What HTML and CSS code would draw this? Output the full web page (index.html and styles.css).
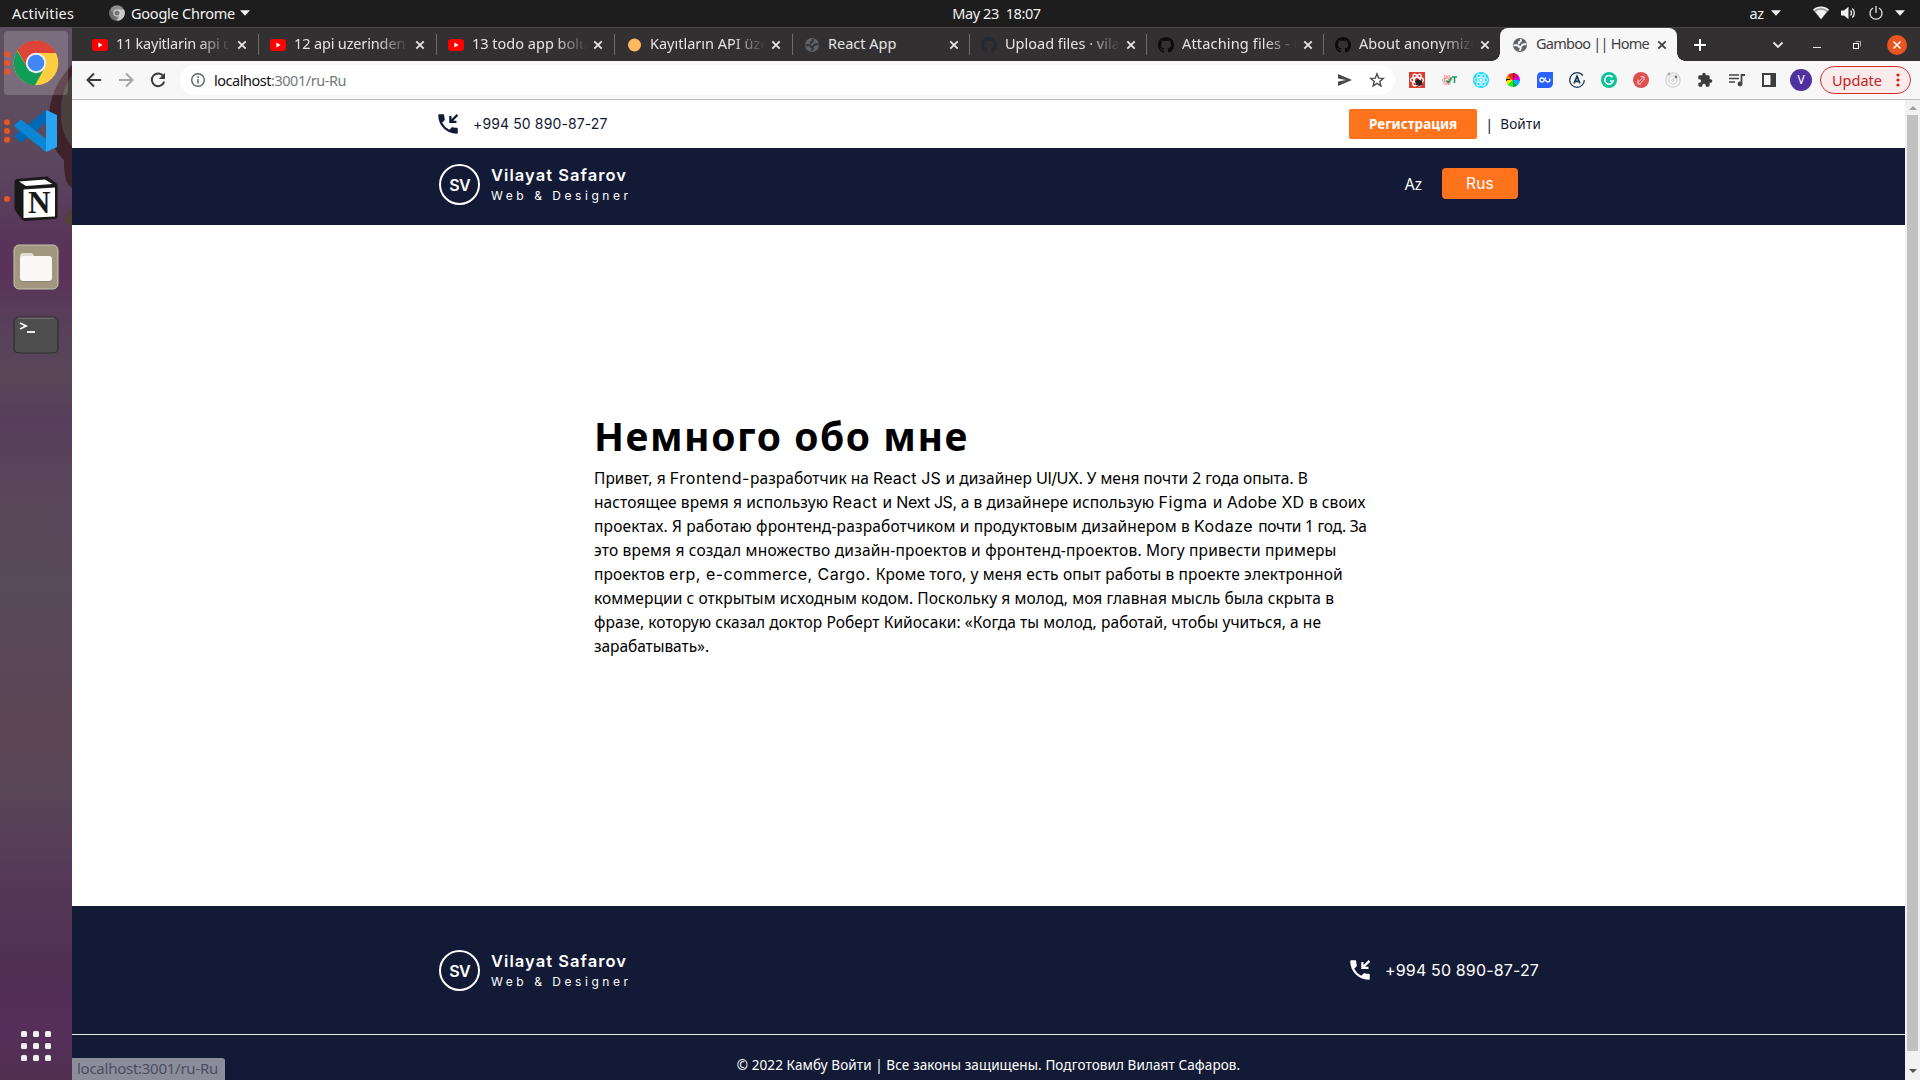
FILE: index.html
```html
<!DOCTYPE html>
<html lang="ru">
<head>
<meta charset="utf-8">
<title>Gamboo || Home</title>
<link rel="stylesheet" href="styles.css">
</head>
<body>
<svg class="defs" width="0" height="0">
  <symbol id="i-yt" viewBox="0 0 16 16"><rect y="2" width="16" height="12" rx="3" fill="#f00"/><path d="M6.400 5.500v5L10.600 8z" fill="#fff"/></symbol>
  <symbol id="i-globe" viewBox="0 0 16 16"><circle cx="8" cy="8" r="7" fill="#5f6368"/><path d="M2.500 8.200h2.700q1.600.1 1.700 1.600h1.600M8.800 2.800q.4 1.900-1.200 2.200-.9.200-.7 1.300" class="land"/><path d="M13.600 7.300h-2.200q-1.300.2-1.600 1.600M8.500 10q.6 1.400-.5 3" class="land"/></symbol>
  <symbol id="i-gh" viewBox="0 0 16 16"><path d="M8 0C3.580 0 0 3.580 0 8c0 3.540 2.290 6.530 5.470 7.590.4.070.55-.17.55-.38 0-.19-.01-.82-.01-1.490-2.010.37-2.530-.49-2.690-.94-.09-.23-.48-.94-.82-1.130-.28-.15-.68-.52-.01-.53.63-.01 1.080.58 1.230.82.72 1.210 1.870.87 2.330.66.070-.52.28-.87.51-1.070-1.780-.2-3.640-.89-3.640-3.950 0-.87.31-1.590.82-2.150-.08-.2-.36-1.020.08-2.120 0 0 .67-.21 2.200.82.64-.18 1.320-.27 2-.27s1.360.09 2 .27c1.530-1.040 2.200-.82 2.200-.82.44 1.100.16 1.920.08 2.120.51.56.82 1.270.82 2.150 0 3.070-1.870 3.750-3.650 3.950.29.25.54.73.54 1.480 0 1.070-.01 1.930-.01 2.200 0 .21.15.46.55.38A8.010 8.010 0 0 0 16 8c0-4.420-3.580-8-8-8z" fill="currentColor"/></symbol>
  <symbol id="i-x" viewBox="0 0 16 16"><path d="M4.300 4.300l7.400 7.400M11.700 4.300l-7.400 7.400" stroke="currentColor" stroke-width="1.900" fill="none"/></symbol>
  <symbol id="i-call" viewBox="0 0 24 24"><path fill="currentColor" d="M20 15.500c-1.250 0-2.450-.2-3.570-.57a1.020 1.020 0 0 0-1.020.24l-2.200 2.200a15.100 15.100 0 0 1-6.590-6.590l2.200-2.200c.28-.28.36-.67.25-1.020A11.360 11.360 0 0 1 8.500 4c0-.55-.45-1-1-1H4c-.55 0-1 .45-1 1 0 9.390 7.610 17 17 17 .55 0 1-.45 1-1v-3.500c0-.55-.45-1-1-1z"/><path d="M20.700 3.600L14.800 9.500M14.200 4.500v5.600h5.600" stroke="currentColor" stroke-width="2.100" fill="none"/></symbol>
  <symbol id="i-down" viewBox="0 0 10 6"><path d="M0 .3h10L5 5.700z" fill="currentColor"/></symbol>
  <symbol id="i-atom" viewBox="0 0 16 16"><g fill="none" stroke="currentColor" stroke-width="1.300"><ellipse cx="8" cy="8" rx="6.500" ry="2.600"/><ellipse cx="8" cy="8" rx="6.500" ry="2.600" transform="rotate(60 8 8)"/><ellipse cx="8" cy="8" rx="6.500" ry="2.600" transform="rotate(120 8 8)"/></g></symbol>
</svg>

<header class="panel">
  <div class="panel-left"><span class="activities">Activities</span>
    <svg class="mono-chrome" viewBox="0 0 16 16"><circle cx="8" cy="8" r="7.700" fill="#8d8d8d"/><path d="M8 4.500h7A7.700 7.700 0 0 1 8 15.700L11 9.800z" fill="#c9c9c9"/><path d="M1.500 3.800L5 10l3 2-1.500 3.600A7.700 7.700 0 0 1 1.500 3.800z" fill="#6e6e6e"/><circle cx="8" cy="8" r="3.500" fill="#ddd"/><circle cx="8" cy="8" r="2.600" fill="#777"/></svg>
    <span class="app-name">Google Chrome</span><svg class="caret"><use href="#i-down"/></svg></div>
  <div class="clock">May 23 &nbsp;18:07</div>
  <div class="tray"><span class="lang">az</span><svg class="caret"><use href="#i-down"/></svg>
    <svg class="wifi" width="16" height="14" viewBox="0 0 16 14"><path d="M.4 4.300a11 11 0 0 1 15.200 0L8 13.500z" fill="#9a9a9a"/><path d="M.4 4.300a11 11 0 0 1 15.200 0" fill="none" stroke="#f2f2f2" stroke-width="1.400"/><path d="M2.400 5.800a8.500 8.500 0 0 1 11.200 0L8 13z" fill="#f2f2f2"/></svg>
    <svg class="vol" width="16" height="14" viewBox="0 0 16 14"><path d="M0 4.500h3L7.500.8v12.400L3 9.500H0z" fill="#f2f2f2"/><path d="M9.500 4.500a3.500 3.500 0 0 1 0 5M11.300 2.500a6 6 0 0 1 0 9" fill="none" stroke="#f2f2f2" stroke-width="1.300"/></svg>
    <svg class="power" width="14" height="14" viewBox="0 0 14 14"><path d="M4 2A6 6 0 1 0 10 2M7 0v7" fill="none" stroke="#e6e6e6" stroke-width="1.300"/></svg>
    <svg class="caret"><use href="#i-down"/></svg></div>
</header>

<div class="desktop">
<aside class="dock">
  <svg class="wallpaper" viewBox="0 0 72 200" width="72" height="200"><path d="M72 38C58 52 49 70 49 92c0 20 5 32 15 41 0 20 3 24 8 28z" fill="#40222c"/><path d="M72 48c-9 12-12 28-11 44 1 12 5 20 11 27z" fill="#4b4040"/><path d="M72 182c-6 3-8 9-8 13l8 5z" fill="#54403a"/></svg>
  <div class="dock-item active"><i class="dots d3"></i>
    <svg width="46" height="46" viewBox="0 0 46 46"><circle cx="23" cy="23" r="22.300" fill="#ffcd40"/><path d="M23 23L4.500 10.600A22.300 22.300 0 0 1 43 13H23z" fill="#db4437"/><path d="M4.200 11.100A22.300 22.300 0 0 0 22 45.300L31 29 14 27z" fill="#0f9d58"/><path d="M4.500 10.600L14 27l9-14h20A22.300 22.300 0 0 0 4.500 10.600z" fill="#db4437"/><circle cx="23" cy="23" r="10.200" fill="#f1f1f1"/><circle cx="23" cy="23" r="8.300" fill="#4285f4"/></svg></div>
  <div class="dock-item"><i class="dots d3"></i>
    <svg width="44" height="44" viewBox="0 0 44 44"><path d="M32 1v13L7 33.500 1 28.500c-.8-.8-.8-1.700 0-2.500z" fill="#0069b3"/><path d="M32 43V30L7 10.500 1 15.500c-.8.800-.8 1.700 0 2.500z" fill="#0b86d4"/><path d="M32 1l11 5v32l-11 5z" fill="#27a5f2"/></svg></div>
  <div class="dock-item"><i class="dots d1"></i>
    <svg width="44" height="46" viewBox="0 0 44 46"><path d="M3 3L33 .5 42 7q1.500 1 1.500 3v30q0 3-3 3L11 45q-2 0-3.500-2L1.500 35Q.5 34 .5 32V6Q.5 3.400 3 3z" fill="#191919"/><path d="M5 5.500L31 3.500l7.500 4.500L12 10z" fill="#fff"/><path d="M9.500 13.500L41 11.500v29L9.500 42z" fill="#fff"/><text x="25.200" y="37" text-anchor="middle" class="notion-n">N</text></svg></div>
  <div class="dock-item">
    <svg width="46" height="46" viewBox="0 0 46 46"><rect x="1" y="1" width="44" height="44" rx="5" fill="#a1977f" stroke="#c9c4b2"/><path d="M7 12q0-3 3-3h9l4 5v8H7z" fill="#e2ddd0"/><rect x="7" y="13" width="32" height="25" rx="3" fill="#8c846f"/><rect x="7" y="12" width="32" height="25" rx="3" fill="#f9f8f7"/></svg></div>
  <div class="dock-item">
    <svg width="46" height="40" viewBox="0 0 46 40"><rect x="1" y="2" width="44" height="36" rx="4.500" fill="#4d4d4d" stroke="#2e2b2e" stroke-width="1.200"/><path d="M5 3.200h36" stroke="#777"/><path d="M7 8l6 3-6 3" fill="none" stroke="#fff" stroke-width="1.800"/><path d="M14 17h8" stroke="#fff" stroke-width="1.800"/></svg></div>
  <div class="apps"><i></i><i></i><i></i><i></i><i></i><i></i><i></i><i></i><i></i></div>
</aside>

<div class="window">
  <div class="tabs">
    <div class="tab"><svg><use href="#i-yt"/></svg><span class="fade a">11 kayitlarin api u</span><svg class="x"><use href="#i-x"/></svg></div>
    <div class="tab"><svg><use href="#i-yt"/></svg><span class="fade b">12 api uzerinden</span><svg class="x"><use href="#i-x"/></svg></div>
    <div class="tab"><svg><use href="#i-yt"/></svg><span class="fade">13 todo app bolu</span><svg class="x"><use href="#i-x"/></svg></div>
    <div class="tab"><svg viewBox="0 0 16 16"><circle cx="8.500" cy="8" r="6.500" fill="#ffb95e"/></svg><span class="fade">Kayıtların API üze</span><svg class="x"><use href="#i-x"/></svg></div>
    <div class="tab n"><svg class="on-dark"><use href="#i-globe"/></svg><span>React App</span><svg class="x"><use href="#i-x"/></svg></div>
    <div class="tab n"><svg class="gh-dim"><use href="#i-gh"/></svg><span class="fade">Upload files · vila</span><svg class="x"><use href="#i-x"/></svg></div>
    <div class="tab n"><svg class="gh"><use href="#i-gh"/></svg><span class="fade c">Attaching files - G</span><svg class="x"><use href="#i-x"/></svg></div>
    <div class="tab n last"><svg class="gh"><use href="#i-gh"/></svg><span class="fade">About anonymize</span><svg class="x"><use href="#i-x"/></svg></div>
    <div class="tab n current"><svg class="on-light"><use href="#i-globe"/></svg><span class="home">Gamboo || Home</span><svg class="x"><use href="#i-x"/></svg></div>
    <svg class="plus" width="14" height="14" viewBox="0 0 14 14"><path d="M7 1v12M1 7h12" stroke="#fff" stroke-width="2"/></svg>
    <div class="controls">
      <svg width="12" height="8" viewBox="0 0 12 8"><path d="M1.500 1.500L6 6l4.500-4.500" fill="none" stroke="#e8e8e8" stroke-width="1.800"/></svg>
      <svg width="8" height="8" viewBox="0 0 8 8"><path d="M0 6.500h8" stroke="#e8e8e8"/></svg>
      <svg width="8" height="8" viewBox="0 0 8 8"><path d="M2.500.5h5v5" fill="none" stroke="#aaa"/><rect x=".5" y="2.500" width="5" height="5" fill="none" stroke="#fff"/></svg>
      <svg width="20" height="20" viewBox="0 0 20 20"><circle cx="10" cy="10" r="10" fill="#e95420"/><path d="M6.500 6.500l7 7M13.500 6.500l-7 7" stroke="#fff" stroke-width="1.500"/></svg>
    </div>
  </div>

  <div class="toolbar">
    <div class="nav-icons">
      <svg width="16" height="16" viewBox="0 0 16 16"><path d="M15 8H2M8 1.500L1.500 8 8 14.500" fill="none" stroke="#3c3c3c" stroke-width="2"/></svg>
      <svg width="16" height="16" viewBox="0 0 16 16"><path d="M1 8h13M8 1.500L14.500 8 8 14.500" fill="none" stroke="#a5a5a5" stroke-width="2"/></svg>
      <svg width="16" height="16" viewBox="0 0 16 16"><path d="M13.500 4.500A6.300 6.300 0 1 0 14.200 9.500" fill="none" stroke="#3c3c3c" stroke-width="2"/><path d="M15 .8v6.200H8.800z" fill="#3c3c3c"/></svg>
    </div>
    <div class="omnibox">
      <svg width="16" height="16" viewBox="0 0 16 16"><circle cx="8" cy="8" r="6.300" fill="none" stroke="#5f6368" stroke-width="1.400"/><path d="M8 7v4.500M8 4.300v1.600" stroke="#5f6368" stroke-width="1.500"/></svg>
      <span class="url">localhost<span>:3001/ru-Ru</span></span>
      <svg class="send" width="14" height="12" viewBox="0 0 14 12"><path d="M0 0l14 6L0 12V7.500L8 6 0 4.500z" fill="#4a4a4a"/></svg>
      <svg width="16" height="16" viewBox="0 0 16 16"><path d="M8 1.800l1.700 4.300 4.600.3-3.500 3 1.100 4.500L8 11.400l-3.900 2.500 1.100-4.500-3.500-3 4.600-.3z" fill="none" stroke="#4a4a4a" stroke-width="1.400"/></svg>
    </div>
    <div class="ext">
      <svg viewBox="0 0 16 16"><rect width="16" height="16" fill="#db3d35"/><use href="#i-atom" class="white" width="16" height="16"/><path d="M6 9l3-2 4 2v4l-3 1-3-1z" fill="#222"/></svg>
      <svg viewBox="0 0 16 16"><use href="#i-atom" class="pink" width="12" height="12" y="2"/><path d="M5.500 8.500l2 2 3-5" fill="none" stroke="#0a9d58" stroke-width="1.500"/><path d="M11 5h5M13.500 5v6" stroke="#0a9d58" stroke-width="1.500"/></svg>
      <svg viewBox="0 0 16 16"><circle cx="8" cy="8" r="8" fill="#15d5fb"/><use href="#i-atom" class="ice" width="16" height="16"/><circle cx="8" cy="8" r="1.500" fill="#fff"/></svg>
      <i class="wheel"></i>
      <svg viewBox="0 0 16 16"><path d="M5 0h11v11q0 5-5 5H0V5q0-5 5-5z" fill="#2962ff"/><path d="M9 5.500C7.500 6.500 7.200 10.200 5 10.200a2 2 0 0 1 0-4.200c2.300 0 3.300 4 5.800 4a2 2 0 0 0 1.600-3.300" fill="none" stroke="#fff" stroke-width="1.300"/></svg>
      <svg viewBox="0 0 16 16"><circle cx="8" cy="8" r="7.300" fill="none" stroke="#1f3a57" stroke-width="1.300" stroke-dasharray="41 5"/><path d="M5 11.500L8 4.300l3 7.200M6 9.300h4" fill="none" stroke="#1f3a57" stroke-width="1.700"/></svg>
      <svg viewBox="0 0 16 16"><circle cx="8" cy="8" r="8" fill="#0cc29a"/><path d="M11.500 5.300A4.300 4.300 0 1 0 12.200 9H9" fill="none" stroke="#fff" stroke-width="1.600"/></svg>
      <svg viewBox="0 0 16 16"><circle cx="8" cy="8" r="8" fill="#dd5051"/><path d="M5 10.500l5.500-5.500M6.500 12L11 7.500M7.500 4.500H11V8M5 7.500V12h3" fill="none" stroke="#f9caca" stroke-width="1"/></svg>
      <svg viewBox="0 0 16 16"><g fill="none" stroke="#cfcfcf" stroke-width="1.100"><circle cx="8" cy="8" r="7.200"/><circle cx="8" cy="8" r="4.200"/></g><circle cx="8" cy="8" r="2" fill="#ddd"/><circle cx="4" cy="2" r="1.500" fill="#aaa"/><circle cx="11" cy="5" r="1.400" fill="#777"/></svg>
      <svg viewBox="0 0 24 24"><path d="M20.500 11H19V7a2 2 0 0 0-2-2h-4V3.500a2.500 2.500 0 0 0-5 0V5H4a2 2 0 0 0-2 2v3.800h1.500a2.700 2.700 0 0 1 0 5.400H2V20a2 2 0 0 0 2 2h3.800v-1.500a2.700 2.700 0 0 1 5.400 0V22H17a2 2 0 0 0 2-2v-4h1.500a2.500 2.500 0 0 0 0-5z" fill="#3c3c3c"/></svg>
      <svg viewBox="0 0 16 16"><path d="M0 3h10M0 6.500h10M0 10h6" stroke="#444" stroke-width="1.600"/><path d="M12.500 12V3H16" fill="none" stroke="#444" stroke-width="1.800"/><circle cx="11" cy="12" r="2.400" fill="#444"/></svg>
      <svg viewBox="0 0 16 16"><rect x="2" y="2" width="12" height="12" fill="none" stroke="#3c3c3c" stroke-width="2"/><path d="M9.500 2H14v12H9.500z" fill="#3c3c3c"/></svg>
    </div>
    <div class="avatar">V</div>
    <div class="update"><span>Update</span><svg width="4" height="14" viewBox="0 0 4 14"><g fill="#c5221f"><circle cx="2" cy="2" r="1.600"/><circle cx="2" cy="7" r="1.600"/><circle cx="2" cy="12" r="1.600"/></g></svg></div>
  </div>

  <div class="viewport">
    <div class="page">
      <div class="contact-bar">
        <svg class="call" width="26" height="26"><use href="#i-call"/></svg><span class="tel">+994 50 890-87-27</span>
        <button class="register">Регистрация</button><span class="sep">|</span><span class="login">Войти</span>
      </div>
      <nav class="site-nav">
        <div class="brand"><div class="badge">SV</div><div class="brand-text"><b>Vilayat Safarov</b><small>Web &amp; Designer</small></div></div>
        <div class="langs"><span>Az</span><button>Rus</button></div>
      </nav>
      <main>
        <h1>Немного обо мне</h1>
        <p>
          <span class="line l1">Привет, я <i class="wide">Frontend-</i>разработчик на <i>React JS </i>и дизайнер <i class="tight">UI/UX. </i>У меня почти 2 года опыта. В</span>
          <span class="line l2">настоящее время я использую <i class="mid">React </i>и <i class="tight">Next JS, </i>а в дизайнере использую <i class="wide">Figma </i>и <i>Adobe XD </i>в своих</span>
          <span class="line l3">проектах. Я работаю фронтенд-разработчиком и продуктовым дизайнером в <i class="mid">Kodaze </i><em>почти 1 год. За</em></span>
          <span class="line l4">это время я создал множество дизайн-проектов и фронтенд-проектов. Могу привести примеры</span>
          <span class="line l5">проектов <i class="mid">erp, e-commerce, Cargo. </i>Кроме того, у меня есть опыт работы в проекте электронной</span>
          <span class="line l6">коммерции с открытым исходным кодом. Поскольку я молод, моя главная мысль была скрыта в</span>
          <span class="line l7">фразе, которую сказал доктор Роберт Кийосаки: «Когда ты молод, работай, чтобы учиться, а не</span>
          <span class="line l8">зарабатывать».</span>
        </p>
      </main>
      <footer>
        <div class="footer-top">
          <div class="brand"><div class="badge">SV</div><div class="brand-text"><b>Vilayat Safarov</b><small>Web &amp; Designer</small></div></div>
          <div class="footer-tel"><svg width="26" height="26"><use href="#i-call"/></svg><span>+994 50 890-87-27</span></div>
        </div>
        <div class="copy">© 2022 Камбу Войти | Все законы защищены. Подготовил Вилаят Сафаров.</div>
      </footer>
    </div>
    <div class="scrollbar"><svg viewBox="0 0 8 4"><path d="M0 4l4-4 4 4z" fill="#a0a0a0"/></svg><div class="thumb"></div><svg viewBox="0 0 8 4"><path d="M0 0l4 4 4-4z" fill="#505050"/></svg></div>
    <div class="status">localhost:3001/ru-Ru</div>
  </div>
</div>
</div>
</body>
</html>
```
FILE: styles.css
```css
* { box-sizing: border-box; }
body { margin: 0; width: 1920px; height: 1080px; overflow: hidden; font-family: "Noto Sans", sans-serif; font-size: 14.5px; background: #fff; }
svg { display: block; flex: none; overflow: visible; }
.defs { position: absolute; }
.land { fill: none; stroke: var(--land); stroke-width: 1.9; stroke-linecap: round; }
.on-dark { --land: #333031; }
.on-light { --land: #f7f7f7; }

/* desktop panel */
.panel { height: 27px; background: #1d1d1d; color: #f2f2f2; display: grid; grid-template-columns: 1fr auto 1fr; align-items: center; line-height: 26px; padding-bottom: 1px; }
.panel-left { display: flex; align-items: center; padding-left: 12px; }
.activities { letter-spacing: .16px; width: 97px; }
.mono-chrome { width: 16px; height: 16px; margin-right: 6px; }
.app-name { letter-spacing: -.23px; width: 109px; }
.caret { width: 10px; height: 6px; }
.clock { letter-spacing: -.4px; margin-left: 73px; white-space: nowrap; }
.tray { display: flex; align-items: center; justify-content: flex-end; padding-right: 15px; }
.lang { letter-spacing: -.2px; margin-right: 7px; }
.wifi { margin-left: 32px; }
.vol { margin-left: 12px; }
.power { margin: 0 12px 0 12px; }

.desktop { display: flex; height: 1053px; }

/* dock */
.dock { position: relative; width: 72px; padding: 4px 4px 0; display: flex; flex-direction: column; background: linear-gradient(#5f4f62 0, #5b485d 130px, #58355a 210px, #593258 245px, #58435a 310px, #584658 350px, #573f5b 395px, #5a475b 470px, #594b5b 560px, #5a4656 660px, #5c4555 710px, #584758 760px, #553957 850px, #512f55 940px, #552f59 1010px, #513051 1053px); }
.wallpaper { position: absolute; left: 0; top: 0; }
.dock-item { position: relative; height: 64px; margin-bottom: 4px; border-radius: 4px; display: flex; align-items: center; justify-content: center; }
.dock-item.active { background: rgba(255, 255, 255, .18); }
.dots { position: absolute; left: 0; top: 50%; width: 6px; height: 6px; margin-top: -3px; border-radius: 50%; background: #e95420; }
.d3 { box-shadow: 0 -8.700px #e95420, 0 8.700px #e95420; }
.notion-n { font: 700 31px "Liberation Serif", serif; fill: #191919; }
.apps { margin: auto auto 19px; display: grid; grid-template-columns: repeat(3, 6px); gap: 6px; }
.apps { row-gap: 6px; }
.apps i { height: 6px; border-radius: 1.5px; background: #f0eeee; }

/* browser chrome */
.window { flex: 1; min-width: 0; display: flex; flex-direction: column; }
.tabs { height: 34px; background: #333031; border-top: 1px solid #484546; display: flex; align-items: center; padding-left: 8px; color: #e4e4e4; }
.tab { position: relative; width: 178px; height: 33px; padding-left: 11.5px; display: flex; align-items: center; }
.tab.n { width: 177px; }
.tab svg { width: 16px; height: 16px; }
.tab span { width: 117px; margin-left: 8.5px; height: 24px; line-height: 21px; overflow: hidden; white-space: nowrap; }
.tab .x { margin-left: 1px; }
.tab:not(.last, .current)::after { content: ""; position: absolute; right: -1px; top: 6px; width: 1px; height: 21px; background: #6e6b6c; }
.fade { -webkit-mask-image: linear-gradient(90deg, #000 83px, transparent 115px); mask-image: linear-gradient(90deg, #000 83px, transparent 115px); }
.fade.a { letter-spacing: -.25px; }
.fade.b { letter-spacing: -.15px; }
.fade.c { letter-spacing: .16px; }
.gh { color: #0b0b0b; }
.gh-dim { color: #24292f; }
.current { height: 33px; background: #f7f7f7; border-radius: 8px 8px 0 0; color: #3f4043; }
.current::before, .current::after { content: ""; position: absolute; bottom: 0; width: 8px; height: 8px; }
.current::before { left: -8px; background: radial-gradient(circle at 0 0, transparent 7.5px, #f7f7f7 8px); }
.current::after { right: -8px; background: radial-gradient(circle at 100% 0, transparent 7.5px, #f7f7f7 8px); }
.tab .home { letter-spacing: -.75px; }
.plus { margin-left: 16px; }
.controls { flex: 1; display: flex; align-items: center; justify-content: flex-end; gap: 0; padding-right: 13px; }
.controls svg:nth-child(2) { margin-left: 29px; }
.controls svg:nth-child(3) { margin-left: 32px; }
.controls svg:nth-child(4) { margin-left: 26px; }

.toolbar { height: 39px; background: #f7f7f7; border-bottom: 1px solid #bbb; display: flex; align-items: center; }
.nav-icons { width: 108px; padding-left: 14px; display: flex; gap: 16px; }
.omnibox { width: 1215px; height: 30px; border-radius: 15px; background: #fff; display: flex; align-items: center; padding: 0 10px; }
.url { margin-left: 8px; letter-spacing: -.47px; color: #111; line-height: 20px; margin-top: -1px; }
.url span { color: #75777a; }
.send { margin: 0 17px 0 auto; }
.ext { display: flex; gap: 16px; margin-left: 14px; }
.ext svg, .wheel { width: 16px; height: 16px; }
.wheel { border: 1px solid #f7f7f7; border-radius: 50%; background: conic-gradient(#222 0 15deg, #e4007c 15deg 60deg, #c0f 60deg 95deg, #00b4f0 95deg 150deg, #0a4 150deg 180deg, #2e2 180deg 230deg, #fd0 230deg 265deg, #111 265deg 280deg, #f80 280deg 310deg, #f22 310deg); }
.white { color: #fff; }
.pink { color: #f29a9a; }
.ice { color: #bdf4ff; }
.avatar { width: 22px; height: 22px; border-radius: 50%; background: #5130a0; color: #fff; font-size: 12px; line-height: 22px; text-align: center; margin-left: 13px; }
.update { width: 91px; height: 28px; margin-left: 8px; border: 1px solid #d9302c; border-radius: 14px; background: #fbebea; color: #c5221f; display: flex; align-items: center; justify-content: space-between; padding: 0 10px 1px 11px; line-height: 24px; }

/* page */
.viewport { position: relative; flex: 1; display: flex; min-height: 0; }
.page { width: 1833px; display: flex; flex-direction: column; background: #fff; }
button { border: 0; color: #fff; background: #ff731d; padding: 0; font-family: inherit; }
.contact-bar { height: 48px; padding: 0 364px 0 363px; display: flex; align-items: center; color: #131a35; }
.call { margin-right: 12px; }
.tel { margin-right: auto; font: 14px/20px Inter, sans-serif; letter-spacing: .12px; }
.register { width: 128px; height: 30px; border-radius: 2px; font-size: 13.5px; font-weight: 700; }
.sep { margin: 0 10px 0 8px; width: 5px; text-align: center; }
.login { font-size: 13.5px; letter-spacing: .2px; }
.site-nav { height: 77px; background: #131a35; padding: 0 387px 0 367px; display: flex; justify-content: space-between; align-items: center; color: #fff; }
.brand { display: flex; align-items: center; gap: 11px; color: #fff; padding-bottom: 4px; }
.badge { width: 41px; height: 41px; border: 2px solid #fff; border-radius: 50%; font: 600 16px/38px Inter, sans-serif; letter-spacing: -.7px; text-align: center; }
.brand-text { font-family: Inter, sans-serif; display: flex; flex-direction: column; height: 41px; }
.brand-text b { font-size: 16.5px; font-weight: 600; line-height: 22px; letter-spacing: 1.05px; }
.brand-text small { font-size: 12px; line-height: 19px; letter-spacing: 3.55px; }
.langs { display: flex; align-items: center; font-size: 15.5px; padding-bottom: 6px; gap: 20px; }
.langs button { width: 76px; height: 31px; border-radius: 4px; font: 15.5px Inter, sans-serif; letter-spacing: .2px; }
main { height: 681px; padding: 183px 0 0 522px; color: #000; }
h1 { margin: 0; font-size: 39px; line-height: 56px; font-weight: 700; letter-spacing: 1.55px; }
p { margin: 2px 0 0; font-size: 15.5px; line-height: 24px; }
.line { display: block; white-space: nowrap; letter-spacing: .1px; }
.line i { font: 16px/1 Inter, sans-serif; letter-spacing: .13px; }
.line .tight { letter-spacing: -.45px; }
.line .mid { letter-spacing: .46px; }
.line .wide { letter-spacing: .62px; }
.l1 { letter-spacing: .04px; }
.l3 { letter-spacing: .157px; }
.l3 em { font-style: normal; letter-spacing: -.26px; }
.l4 { letter-spacing: .2px; }
.l5 { letter-spacing: .14px; }
.l6 { letter-spacing: .087px; }
.l7 { letter-spacing: .073px; }
.l8 { letter-spacing: -.06px; }
footer { flex: 1; background: #131a35; color: #fff; }
.footer-top { height: 129px; border-bottom: 1px solid #e9edf0; padding: 4px 366px 0 367px; display: flex; align-items: center; justify-content: space-between; }
.footer-tel { display: flex; align-items: center; gap: 12px; font: 16px/20px Inter, sans-serif; letter-spacing: .15px; padding-bottom: 5px; }
.copy { text-align: center; font-size: 13.5px; letter-spacing: .092px; line-height: 20px; padding-top: 20px; }
.scrollbar { width: 15px; background: #f1f1f1; display: flex; flex-direction: column; align-items: center; padding: 6px 0 7px; }
.scrollbar svg { width: 8px; height: 4px; }
.thumb { width: 11px; height: 936px; margin: 5px 0 auto; background: #c1c1c1; }
.status { position: absolute; left: 0; bottom: 0; width: 153px; height: 22px; border-radius: 0 3px 0 0; background: #8b8d9b; color: #4b4e61; padding-left: 5px; font-size: 15px; line-height: 21px; letter-spacing: -.26px; }
```
